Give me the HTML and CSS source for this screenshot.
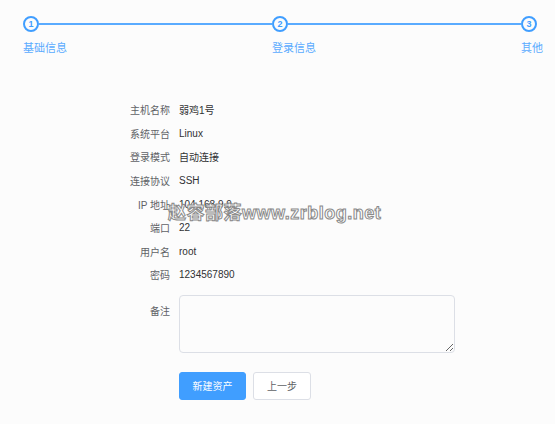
FILE: index.html
```html
<!DOCTYPE html>
<html lang="zh-CN">
<head>
  <meta charset="UTF-8" />
  <title>新建资产</title>
  <meta name="viewport" content="width=device-width, initial-scale=1.0" />
  <link rel="stylesheet" href="styles.css">
</head>
<body>

  <!-- 步骤条 -->
  <div class="steps">
    <div class="step">
      <div class="step-head"><span class="step-icon">1</span><span class="step-line"></span></div>
      <div class="step-title">基础信息</div>
    </div>
    <div class="step">
      <div class="step-head"><span class="step-icon">2</span><span class="step-line"></span></div>
      <div class="step-title">登录信息</div>
    </div>
    <div class="step step-last">
      <div class="step-head"><span class="step-icon">3</span></div>
      <div class="step-title">其他</div>
    </div>
  </div>

  <!-- 确认信息 -->
  <div class="form">
    <div class="row"><span class="label">主机名称</span><span class="value">弱鸡1号</span></div>
    <div class="row"><span class="label">系统平台</span><span class="value">Linux</span></div>
    <div class="row"><span class="label">登录模式</span><span class="value">自动连接</span></div>
    <div class="row"><span class="label">连接协议</span><span class="value">SSH</span></div>
    <div class="row"><span class="label">IP 地址</span><span class="value">104.168.9.9</span></div>
    <div class="row"><span class="label">端口</span><span class="value">22</span></div>
    <div class="row"><span class="label">用户名</span><span class="value">root</span></div>
    <div class="row"><span class="label">密码</span><span class="value">1234567890</span></div>

    <div class="row row-note">
      <span class="label">备注</span>
      <textarea class="note-input"></textarea>
    </div>

    <div class="actions">
      <button class="btn btn-primary">新建资产</button>
      <button class="btn btn-back">上一步</button>
    </div>
  </div>

  <div class="watermark">赵容部落www.zrblog.net</div>

</body>
</html>
```

FILE: styles.css
```css
body {
  margin: 0;
  font-family: "Liberation Sans", "Noto Sans CJK SC", sans-serif;
  font-size: 10px;
  background-color: #fcfcfc;
  color: #606266;
  position: relative;
  height: 424px;
  overflow: hidden;
}

/* 步骤条 */
.steps {
  display: flex;
  padding: 16px 12px 0 23px;
}

.step {
  flex: 1;
}

.step-last {
  flex: none;
}

.step-head {
  display: flex;
  align-items: center;
  height: 16px;
}

.step-icon {
  box-sizing: border-box;
  width: 16px;
  height: 16px;
  border: 2px solid #409eff;
  border-radius: 50%;
  color: #409eff;
  font-size: 9px;
  font-weight: bold;
  line-height: 12px;
  text-align: center;
  flex: none;
}

.step-line {
  flex: 1;
  height: 2px;
  background: #5aabff;
}

.step-title {
  margin-top: 8px;
  color: #5aabff;
  font-size: 11px;
  line-height: 16px;
}

/* 表单 */
.form {
  padding-top: 42px;
}

.row {
  display: flex;
  height: 23.6px;
  align-items: center;
}

.label {
  width: 80px;
  padding: 0 9px 0 90px;
  text-align: right;
  color: #606266;
}

.value {
  color: #303133;
}

.row-note {
  height: auto;
  align-items: flex-start;
  margin-top: 8px;
}

.row-note .label {
  padding-top: 8px;
}

.note-input {
  box-sizing: border-box;
  width: 276px;
  height: 58px;
  margin: 0;
  border: 1px solid #dcdfe6;
  border-radius: 4px;
  background: #fcfcfc;
  font-family: inherit;
}

.actions {
  display: flex;
  gap: 7px;
  margin: 19px 0 0 179px;
}

.btn {
  box-sizing: border-box;
  height: 28px;
  padding: 0;
  border: 1px solid #dcdfe6;
  border-radius: 3px;
  background: #fff;
  color: #606266;
  font-family: inherit;
  font-size: 10px;
  white-space: nowrap;
  cursor: pointer;
}

.btn-primary {
  width: 67px;
  background: #409eff;
  border-color: #409eff;
  color: #fff;
}

.btn-back {
  width: 58px;
}

/* 水印 */
.watermark {
  position: absolute;
  left: 168px;
  top: 198px;
  font-size: 18px;
  font-weight: bold;
  color: #fff;
  -webkit-text-stroke: 1px #8a8a8a;
  letter-spacing: 0.5px;
}
```
